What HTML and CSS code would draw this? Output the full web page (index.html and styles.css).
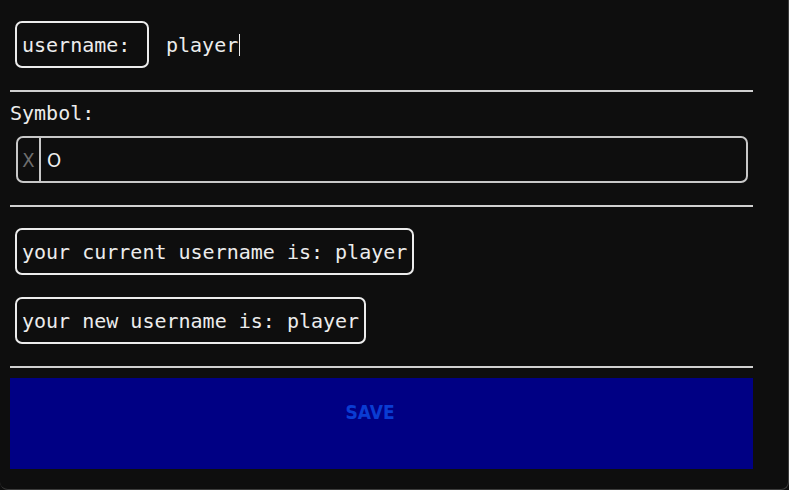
FILE: index.html
```html
<!DOCTYPE html>
<html>
<head>
<meta charset="utf-8">
<link rel="stylesheet" href="styles.css">
</head>
<body>
<div class="frame">
  <div class="page">
    <div class="user-row">
      <div class="tag">username:</div>
      <div class="field">player<span class="caret"></span></div>
    </div>
    <hr class="rule rule-top">
    <div class="label">Symbol:</div>
    <div class="toggle">
      <span class="opt opt-off">X</span>
      <span class="opt opt-on">O</span>
    </div>
    <hr class="rule rule-mid">
    <div class="info-list">
      <div class="tag info">your current username is: player</div>
      <div class="tag info">your new username is: player</div>
    </div>
    <hr class="rule rule-bottom">
    <button class="save">SAVE</button>
  </div>
</div>
</body>
</html>
```
FILE: styles.css
```css
html, body {
  margin: 0;
  padding: 0;
  background: #0e0e0e;
}

.frame {
  box-sizing: border-box;
  width: 789px;
  height: 490px;
  border-right: 1px solid #3c3c3c;
  border-bottom: 1px solid #3c3c3c;
  border-bottom-left-radius: 8px;
  border-bottom-right-radius: 8px;
  overflow: hidden;
}

.page {
  width: 743px;
  padding: 21px 0 0 10px;
  font-family: "DejaVu Sans Mono", "Liberation Mono", monospace;
  font-size: 20px;
  color: #ececec;
}

.user-row {
  display: flex;
  align-items: center;
  gap: 17px;
  padding-left: 5px;
  height: 47px;
}

.tag {
  box-sizing: border-box;
  height: 47px;
  display: flex;
  align-items: center;
  padding: 0 5px;
  border: 2px solid #ececec;
  border-radius: 7px;
  white-space: pre;
}

.user-row .tag {
  width: 134px;
}

.field {
  display: flex;
  align-items: center;
  height: 24px;
}

.caret {
  display: inline-block;
  width: 1px;
  height: 22px;
  background: #ececec;
  margin-left: 1px;
}

.rule {
  border: 0;
  height: 2px;
  background: #d0d0d0;
  margin: 0;
}

.rule-top {
  margin-top: 22px;
}

.label {
  margin-top: 9px;
  height: 24px;
  line-height: 24px;
  color: #ececec;
}

.toggle {
  box-sizing: border-box;
  margin: 11px 5px 0 6px;
  height: 47px;
  border: 2px solid #c8c8c8;
  border-radius: 7px;
  display: flex;
  align-items: center;
  font-family: "DejaVu Sans", sans-serif;
  font-stretch: condensed;
  font-size: 20px;
}

.opt {
  display: flex;
  align-items: center;
  height: 100%;
}

.opt-off {
  color: #6e6e6e;
  width: 21px;
  justify-content: center;
  border-right: 2px solid #c8c8c8;
}

.opt-on {
  color: #f0f0f0;
  padding-left: 6px;
}

.rule-mid {
  margin-top: 22px;
}

.info-list {
  display: flex;
  flex-direction: column;
  align-items: flex-start;
  gap: 22px;
  margin-top: 21px;
  padding-left: 5px;
}

.info {
  padding: 0 5px;
}

.rule-bottom {
  margin-top: 22px;
}

.save {
  display: block;
  width: 743px;
  height: 91px;
  margin-top: 10px;
  border: 0;
  background: #000084;
  color: #0a3cd2;
  font-family: "DejaVu Sans", sans-serif;
  font-stretch: condensed;
  font-weight: bold;
  font-size: 19px;
  padding: 0 23px 23px 0;
}
```
